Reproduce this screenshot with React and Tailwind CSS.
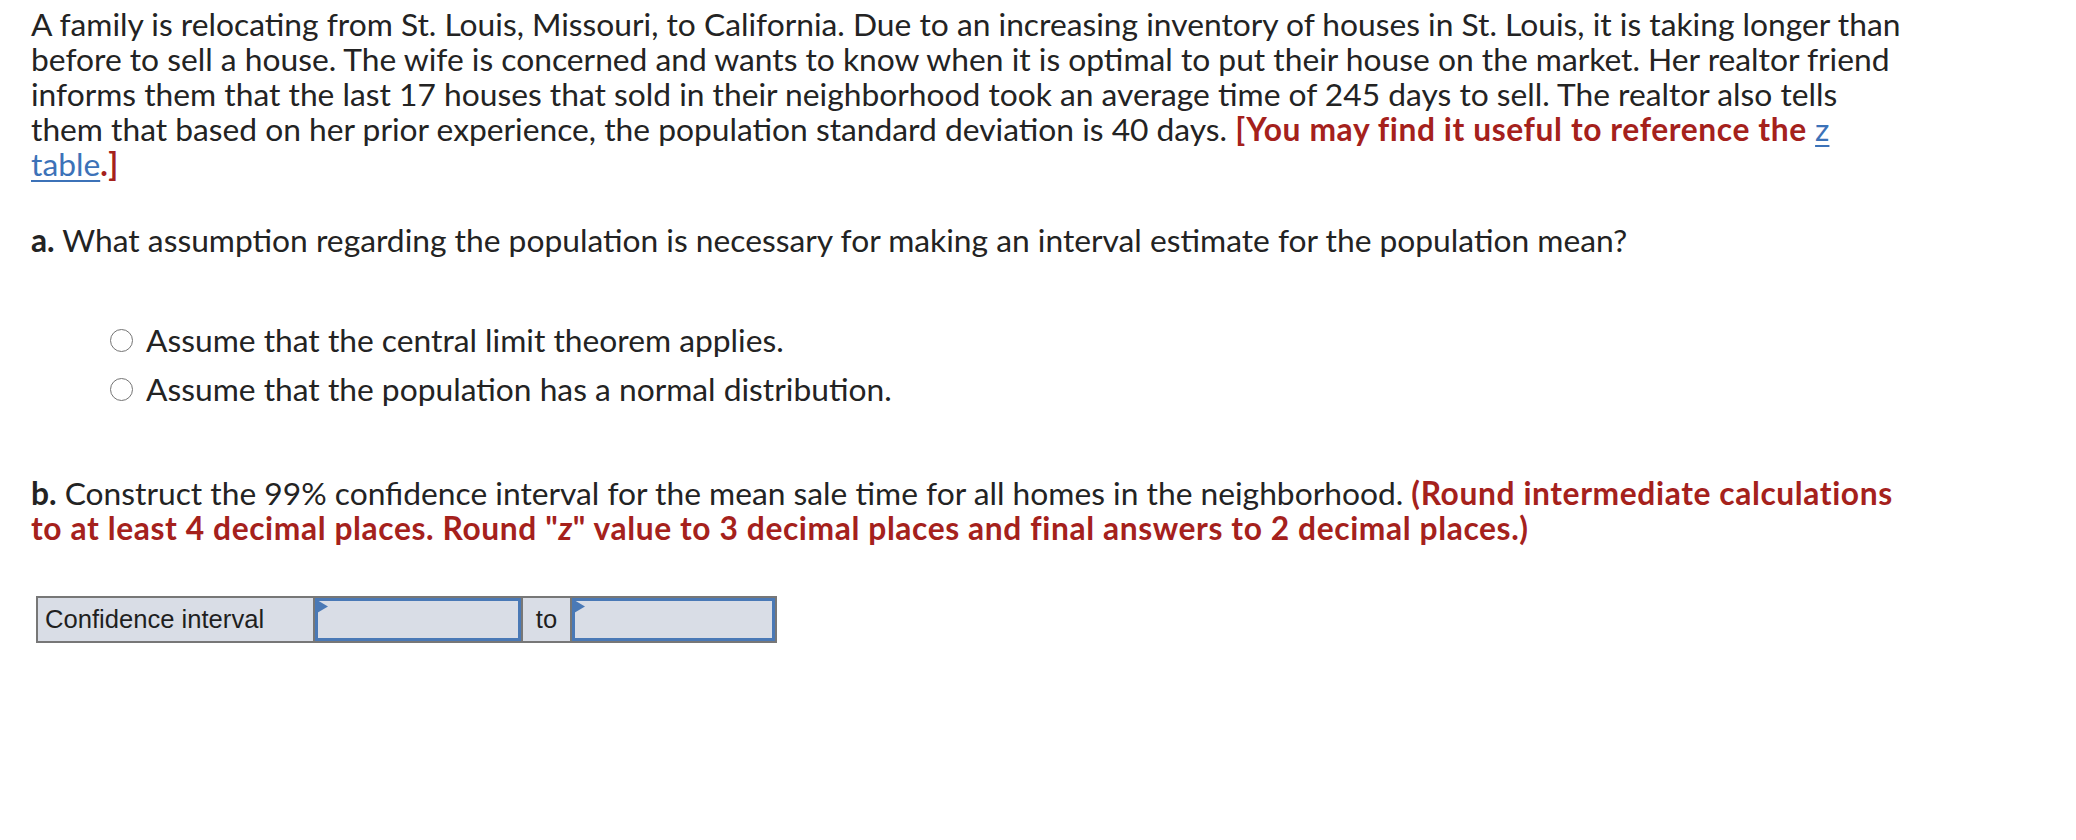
const red = 'font-bold text-[#a5211c] tracking-[0.6px]'
const link = 'text-[#3c72b8] underline underline-offset-4 decoration-2'

const Radio = () => (
  <span className="inline-block w-[23px] h-[23px] rounded-full border-[1.5px] border-[#747474] bg-white shrink-0" />
)

const AnswerBox = () => (
  <div className="relative h-full border-[3px] border-[#4a79b6] bg-[#d9dde6]">
    <svg className="absolute -left-[1px] -top-[1px]" width="11" height="14" viewBox="0 0 11 14">
      <polygon points="0,0 11,6.5 0,13" fill="#4a79b6" />
    </svg>
  </div>
)

export default function App() {
  return (
    <div className="min-h-screen bg-white text-[#232323] font-['Lato','Liberation_Sans',sans-serif] text-[31.75px] leading-[35px]">
      <div className="pl-[31px] pt-[7px] w-[1912px]">
        <p>
          A family is relocating from St. Louis, Missouri, to California. Due to an increasing inventory of houses in St. Louis, it is taking longer than before to sell a house. The wife is concerned and wants to know when it is optimal to put their house on the market. Her realtor friend informs them that the last 17 houses that sold in their neighborhood took an average time of 245 days to sell. The realtor also tells them that based on her prior experience, the population standard deviation is 40 days.{' '}
          <span className={red}>[You may find it useful to reference the </span>
          <a className={link}>z table</a>
          <span className={red}>.]</span>
        </p>

        <p className="mt-[41px]">
          <span className="font-bold">a.</span> What assumption regarding the population is necessary for making an interval estimate for the population mean?
        </p>

        {/* answer choices */}
        <div className="mt-[65px] pl-[79px] flex flex-col gap-[14px]">
          <label className="flex items-center gap-[13px]">
            <Radio />
            <span>Assume that the central limit theorem applies.</span>
          </label>
          <label className="flex items-center gap-[13px]">
            <Radio />
            <span>Assume that the population has a normal distribution.</span>
          </label>
        </div>

        <p className="mt-[69px]">
          <span className="font-bold">b.</span> Construct the 99% confidence interval for the mean sale time for all homes in the neighborhood.{' '}
          <span className={red}>
            (Round intermediate calculations to at least 4 decimal places. Round "<i>z</i>" value to 3 decimal places and final answers to 2 decimal places.)
          </span>
        </p>
      </div>

      {/* answer row */}
      <div className="ml-[36px] mt-[50px] w-[741px] h-[47px] flex border-2 border-[#777777] bg-[#d9dde6] font-['Liberation_Sans',Arial,sans-serif] text-[25.6px] text-[#1f1f1f]">
        <div className="w-[277px] flex items-center pl-[7px] border-r-2 border-[#777777]">Confidence interval</div>
        <div className="w-[206px]">
          <AnswerBox />
        </div>
        <div className="w-[51px] flex items-center justify-center border-x-2 border-[#777777]">to</div>
        <div className="flex-1">
          <AnswerBox />
        </div>
      </div>
    </div>
  )
}
